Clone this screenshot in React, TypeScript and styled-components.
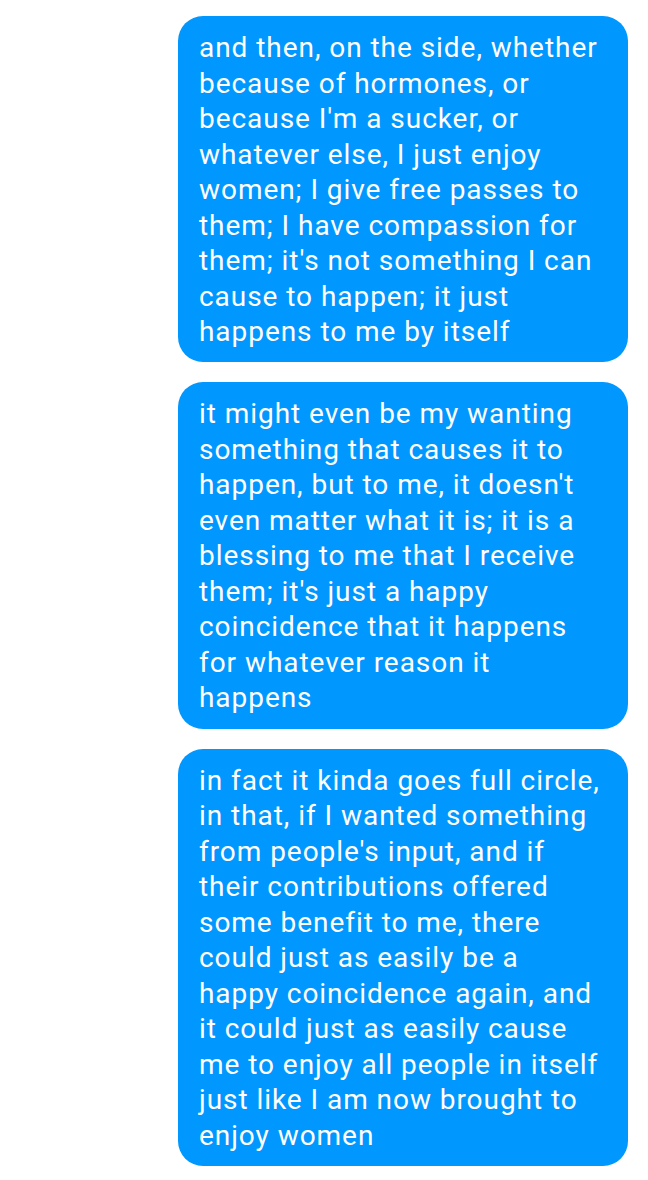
import React from "react";
import styled, { createGlobalStyle } from "styled-components";

const Global = createGlobalStyle`
  html, body { margin: 0; padding: 0; background: #ffffff; }
  body { font-family: Roboto, "Noto Sans", "Liberation Sans", sans-serif; }
`;

const Thread = styled.div`
  display: flex;
  flex-direction: column;
  align-items: flex-end;
  gap: 20px;
  padding: 16px 20px 0 0;
`;

const Bubble = styled.div`
  box-sizing: border-box;
  width: 450px;
  background: #0097ff;
  color: #ffffff;
  border-radius: 25px;
  padding: 14px 24px 12.8px 21px;
  font-size: 28px;
  line-height: 35.5px;
  letter-spacing: 0.95px;
`;

const messages = [
  "and then, on the side, whether because of hormones, or because I'm a sucker, or whatever else, I just enjoy women; I give free passes to them; I have compassion for them; it's not something I can cause to happen; it just happens to me by itself",
  "it might even be my wanting something that causes it to happen, but to me, it doesn't even matter what it is; it is a blessing to me that I receive them; it's just a happy coincidence that it happens for whatever reason it happens",
  "in fact it kinda goes full circle, in that, if I wanted something from people's input, and if their contributions offered some benefit to me, there could just as easily be a happy coincidence again, and it could just as easily cause me to enjoy all people in itself just like I am now brought to enjoy women",
];

export default function App() {
  return (
    <>
      <Global />
      <Thread>
        {messages.map((m, i) => (
          <Bubble key={i}>{m}</Bubble>
        ))}
      </Thread>
    </>
  );
}
